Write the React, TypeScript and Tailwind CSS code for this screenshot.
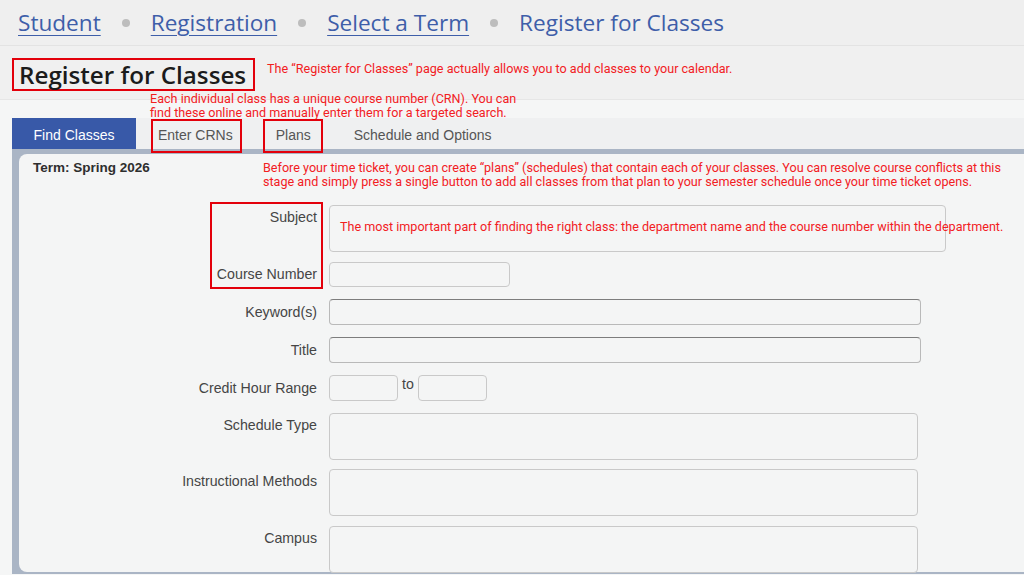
import React from 'react';

const crumbs = ['Student', 'Registration', 'Select a Term'];

const tabs = ['Enter CRNs', 'Plans', 'Schedule and Options'];

function Box({ w, h, dark }: { w: string; h: string; dark?: boolean }) {
  return (
    <div
      className={`${w} ${h} rounded-[4px] border bg-[#f4f5f5] ${
        dark ? 'border-[#b9b9b9] border-t-[#7d7d7d]' : 'border-[#c9c9c9]'
      }`}
    />
  );
}

function Row({
  label,
  children,
  tall,
  className
}: {
  label: string;
  children: React.ReactNode;
  tall?: boolean;
  className?: string;
}) {
  return (
    <div className={`flex ${tall ? 'items-start' : 'items-center'} ${className ?? ''}`}>
      <div className={`w-[298px] text-right ${tall ? 'pt-[2px]' : ''}`}>{label}</div>
      <div className="ml-[12px]">{children}</div>
    </div>
  );
}

export default function App() {
  const note = "text-[#f2201f] font-['Roboto',sans-serif] text-[12.6px] leading-[14px]";
  return (
    <div className="relative h-[575px] w-[1024px] overflow-hidden bg-[#f5f6f6] font-['Liberation_Sans',Arial,sans-serif]">
      {/* breadcrumb */}
      <div className="flex h-[46px] items-center gap-[21px] border-b border-[#e3e3e3] bg-[#efefef] pl-[18px] font-['Open_Sans',sans-serif] text-[22.6px] text-[#3e5ea9]">
        {crumbs.map((c) => (
          <React.Fragment key={c}>
            <span className="underline decoration-1 underline-offset-[4px]">{c}</span>
            <span className="h-[8px] w-[8px] rounded-full bg-[#bdbdbd]" />
          </React.Fragment>
        ))}
        <span>Register for Classes</span>
      </div>

      {/* page title */}
      <div className="h-[54px] border-b border-[#e6e6e6] bg-[#f0f0f0] pl-[12px] pt-[12px]">
        <div className="inline-block border-2 border-[#e3000b] pl-[5px] pr-[7px] font-['Open_Sans',sans-serif] text-[24.2px] leading-[29px] font-semibold text-[#1b1b1b]">
          Register for Classes
        </div>
      </div>

      {/* tabs */}
      <div className="mt-[18px] ml-[12px] flex h-[31px] items-center bg-[#eff0f1] pt-[4px] text-[14px] text-[#555]">
        <div className="-mt-[4px] flex h-[31px] w-[124px] items-center justify-center bg-[#3859a8] pt-[4px] text-white">
          Find Classes
        </div>
        {tabs.map((t, i) => (
          <div key={t} className={i === 0 ? 'ml-[22px]' : 'ml-[43px]'}>
            {t}
          </div>
        ))}
      </div>

      {/* panel */}
      <div className="ml-[12px] h-[425px] bg-[#aab5c5] pt-[5px] pl-[7px] pb-[2px]">
        <div className="h-full rounded-l-[8px] bg-[#f4f5f5] pt-[4px] pl-[14px] text-[14.2px] text-[#454545]">
          <div className="text-[13.5px] font-bold text-[#2e2e2e]">Term: Spring 2026</div>

          <div className="-ml-[14px] mt-[27px] flex flex-col">
            <Row label="Subject" tall>
              <Box w="w-[617px]" h="h-[47px]" />
            </Row>
            <Row label="Course Number" className="mt-[10px]">
              <Box w="w-[181px]" h="h-[25px]" />
            </Row>
            <Row label="Keyword(s)" className="mt-[12px]">
              <Box w="w-[592px]" h="h-[26px]" dark />
            </Row>
            <Row label="Title" className="mt-[12px]">
              <Box w="w-[592px]" h="h-[26px]" dark />
            </Row>
            <Row label="Credit Hour Range" className="mt-[12px]">
              <div className="flex items-start">
                <Box w="w-[69px]" h="h-[26px]" />
                <span className="mx-[4px] -mt-[1px]">to</span>
                <Box w="w-[69px]" h="h-[26px]" />
              </div>
            </Row>
            <Row label="Schedule Type" tall className="mt-[12px]">
              <Box w="w-[589px]" h="h-[47px]" />
            </Row>
            <Row label="Instructional Methods" tall className="mt-[9px]">
              <Box w="w-[589px]" h="h-[47px]" />
            </Row>
            <Row label="Campus" tall className="mt-[10px]">
              <Box w="w-[589px]" h="h-[47px]" />
            </Row>
          </div>
        </div>
      </div>

      {/* annotations */}
      <p className={`absolute left-[267px] top-[62px] ${note}`}>
        The “Register for Classes” page actually allows you to add classes to your calendar.
      </p>
      <p className={`absolute left-[150px] top-[92px] ${note}`}>
        Each individual class has a unique course number (CRN). You can
        <br />
        find these online and manually enter them for a targeted search.
      </p>
      <div className="absolute left-[151px] top-[119px] h-[34px] w-[91px] border-2 border-[#e3000b]" />
      <div className="absolute left-[263px] top-[119px] h-[34px] w-[60px] border-2 border-[#e3000b]" />
      <p className={`absolute left-[263px] top-[161px] ${note}`}>
        Before your time ticket, you can create “plans” (schedules) that contain each of your classes. You can resolve course conflicts at this
        <br />
        stage and simply press a single button to add all classes from that plan to your semester schedule once your time ticket opens.
      </p>
      <div className="absolute left-[210px] top-[202px] h-[87px] w-[113px] border-2 border-[#e3000b]" />
      <p className={`absolute left-[340px] top-[220px] ${note}`}>
        The most important part of finding the right class: the department name and the course number within the department.
      </p>
    </div>
  );
}
